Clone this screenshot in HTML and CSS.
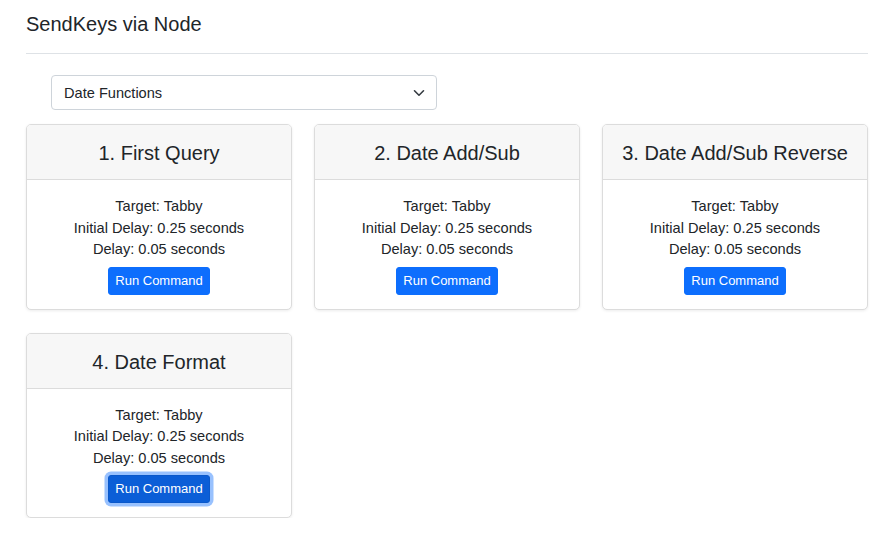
FILE: index.html
```html
<!DOCTYPE html>
<html lang="en">
<head>
<meta charset="utf-8">
<title>SendKeys via Node</title>
<link rel="stylesheet" href="styles.css">
</head>
<body>
<div class="page">
  <h1 class="title">SendKeys via Node</h1>
  <hr class="rule">
  <div class="select-row">
    <div class="select">
      <span class="select-text">Date Functions</span>
      <svg class="chevron" width="12" height="8" viewBox="0 0 12 8"><path d="M1.5 1.8 6 6.2l4.5-4.4" fill="none" stroke="#343a40" stroke-width="1.6" stroke-linecap="round" stroke-linejoin="round"/></svg>
    </div>
  </div>
  <div class="grid">
    <div class="card">
      <div class="card-header">1. First Query</div>
      <div class="card-body">
        <div class="line">Target: Tabby</div>
        <div class="line">Initial Delay: 0.25 seconds</div>
        <div class="line">Delay: 0.05 seconds</div>
        <button class="btn">Run Command</button>
      </div>
    </div>
    <div class="card">
      <div class="card-header">2. Date Add/Sub</div>
      <div class="card-body">
        <div class="line">Target: Tabby</div>
        <div class="line">Initial Delay: 0.25 seconds</div>
        <div class="line">Delay: 0.05 seconds</div>
        <button class="btn">Run Command</button>
      </div>
    </div>
    <div class="card">
      <div class="card-header">3. Date Add/Sub Reverse</div>
      <div class="card-body">
        <div class="line">Target: Tabby</div>
        <div class="line">Initial Delay: 0.25 seconds</div>
        <div class="line">Delay: 0.05 seconds</div>
        <button class="btn">Run Command</button>
      </div>
    </div>
    <div class="card">
      <div class="card-header">4. Date Format</div>
      <div class="card-body">
        <div class="line">Target: Tabby</div>
        <div class="line">Initial Delay: 0.25 seconds</div>
        <div class="line">Delay: 0.05 seconds</div>
        <button class="btn btn-focus">Run Command</button>
      </div>
    </div>
  </div>
</div>
</body>
</html>
```
FILE: styles.css
```css
* { box-sizing: border-box; }
html, body { margin: 0; padding: 0; background: #fff; }
body {
  font-family: "Liberation Sans", Arial, sans-serif;
  color: #212529;
  font-size: 14px;
}
.page {
  width: 842px;
  margin-left: 26px;
  padding-top: 12px;
}
.title {
  margin: 0;
  font-size: 20px;
  line-height: 24px;
  font-weight: 400;
}
.rule {
  margin: 17px 0 0 0;
  border: 0;
  border-top: 1px solid #dee2e6;
  height: 0;
}
.select-row {
  padding: 21px 0 0 25px;
}
.select {
  width: 386px;
  height: 35px;
  border: 1px solid #ced4da;
  border-radius: 4px;
  display: flex;
  align-items: center;
  justify-content: space-between;
  padding: 0 11px 0 12px;
  background: #fff;
}
.select-text { font-size: 14.6px; line-height: 20px; }
.chevron { display: block; }
.grid {
  margin-top: 14px;
  display: grid;
  grid-template-columns: repeat(3, 266px);
  column-gap: 22px;
  row-gap: 23px;
  align-items: start;
}
.card {
  border: 1px solid #dcdcdc;
  border-radius: 5px;
  box-shadow: 0 1px 3px rgba(0, 0, 0, 0.08);
  background: #fff;
  overflow: hidden;
}
.card-header {
  background: #f7f7f7;
  border-bottom: 1px solid #dcdcdc;
  text-align: center;
  font-size: 20px;
  line-height: 24px;
  padding: 16px 6px 14px;
  white-space: nowrap;
}
.card-body {
  padding: 16px 10px 14px;
  text-align: center;
  display: flex;
  flex-direction: column;
  align-items: center;
}
.line {
  font-size: 14.6px;
  line-height: 21.5px;
}
.btn {
  margin-top: 6px;
  font-family: inherit;
  font-size: 13px;
  line-height: 18px;
  padding: 4px 6px;
  height: 28px;
  color: #fff;
  background: #0d6efd;
  border: 1px solid #0d6efd;
  border-radius: 3px;
  cursor: pointer;
}
.btn-focus {
  background: #0b5ed7;
  border-color: #0a58ca;
  box-shadow: 0 0 0 3.5px rgba(49, 132, 253, 0.5);
}
```
